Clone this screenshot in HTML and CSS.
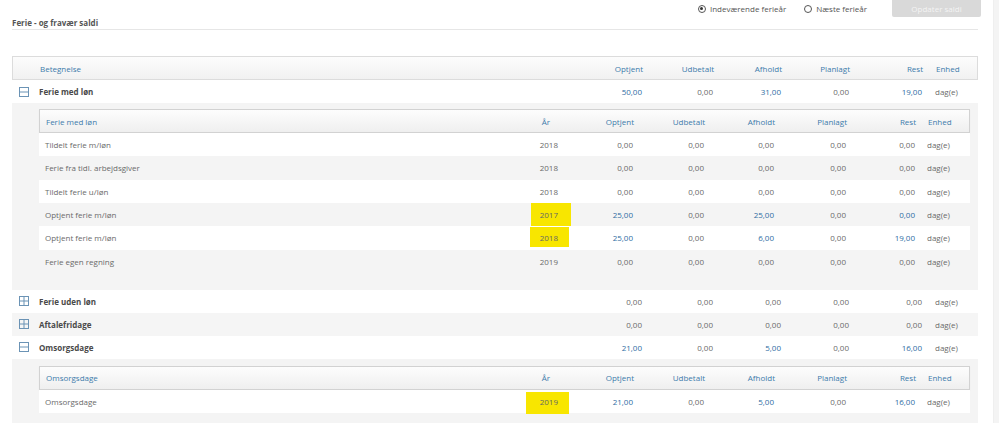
FILE: index.html
```html
<!DOCTYPE html>
<html lang="da">
<head>
<meta charset="utf-8">
<title>Ferie - og fravær saldi</title>
<link rel="stylesheet" href="styles.css">
</head>
<body>
<div class="page">
  <div class="content">
    <div class="topbar">
      <label class="radio"><span class="dot checked"></span>Indeværende ferieår</label>
      <label class="radio second"><span class="dot"></span>Næste ferieår</label>
      <span class="btn">Opdater saldi</span>
    </div>
    <div class="title">Ferie - og fravær saldi</div>

    <div class="main">
      <div class="mrow mhead">
        <span></span>
        <span class="l">Betegnelse</span>
        <span>Optjent</span><span>Udbetalt</span><span>Afholdt</span><span>Planlagt</span><span>Rest</span><span class="unit">Enhed</span>
      </div>

      <div class="mrow">
        <span class="ic"><svg width="10" height="10" viewBox="0 0 10 10"><rect x="0.5" y="0.5" width="9" height="9" fill="none" stroke="#6b93b5"/><line x1="0.5" y1="5" x2="9.5" y2="5" stroke="#6b93b5"/></svg></span>
        <span class="l b">Ferie med løn</span>
        <span class="blue">50,00</span><span>0,00</span><span class="blue">31,00</span><span>0,00</span><span class="blue">19,00</span><span class="unit">dag(e)</span>
      </div>

      <div class="panel">
        <div class="inner">
          <div class="irow ihead">
            <span class="l">Ferie med løn</span><span class="yr">År</span><span>Optjent</span><span>Udbetalt</span><span>Afholdt</span><span>Planlagt</span><span>Rest</span><span class="unit">Enhed</span>
          </div>
          <div class="irow"><span class="l">Tildelt ferie m/løn</span><span>2018</span><span>0,00</span><span>0,00</span><span>0,00</span><span>0,00</span><span>0,00</span><span class="unit">dag(e)</span></div>
          <div class="irow alt"><span class="l">Ferie fra tidl. arbejdsgiver</span><span>2018</span><span>0,00</span><span>0,00</span><span>0,00</span><span>0,00</span><span>0,00</span><span class="unit">dag(e)</span></div>
          <div class="irow"><span class="l">Tildelt ferie u/løn</span><span>2018</span><span>0,00</span><span>0,00</span><span>0,00</span><span>0,00</span><span>0,00</span><span class="unit">dag(e)</span></div>
          <div class="irow alt"><span class="l">Optjent ferie m/løn</span><span><mark class="hl hl1">2017</mark></span><span class="blue">25,00</span><span>0,00</span><span class="blue">25,00</span><span>0,00</span><span class="blue">0,00</span><span class="unit">dag(e)</span></div>
          <div class="irow"><span class="l">Optjent ferie m/løn</span><span><mark class="hl hl2">2018</mark></span><span class="blue">25,00</span><span>0,00</span><span class="blue">6,00</span><span>0,00</span><span class="blue">19,00</span><span class="unit">dag(e)</span></div>
          <div class="irow alt"><span class="l">Ferie egen regning</span><span>2019</span><span>0,00</span><span>0,00</span><span>0,00</span><span>0,00</span><span>0,00</span><span class="unit">dag(e)</span></div>
        </div>
      </div>

      <div class="mrow">
        <span class="ic"><svg width="10" height="10" viewBox="0 0 10 10"><rect x="0.5" y="0.5" width="9" height="9" fill="none" stroke="#6b93b5"/><line x1="0.5" y1="5" x2="9.5" y2="5" stroke="#6b93b5"/><line x1="5" y1="0.5" x2="5" y2="9.5" stroke="#6b93b5"/></svg></span>
        <span class="l b">Ferie uden løn</span>
        <span>0,00</span><span>0,00</span><span>0,00</span><span>0,00</span><span>0,00</span><span class="unit">dag(e)</span>
      </div>
      <div class="mrow alt">
        <span class="ic"><svg width="10" height="10" viewBox="0 0 10 10"><rect x="0.5" y="0.5" width="9" height="9" fill="none" stroke="#6b93b5"/><line x1="0.5" y1="5" x2="9.5" y2="5" stroke="#6b93b5"/><line x1="5" y1="0.5" x2="5" y2="9.5" stroke="#6b93b5"/></svg></span>
        <span class="l b">Aftalefridage</span>
        <span>0,00</span><span>0,00</span><span>0,00</span><span>0,00</span><span>0,00</span><span class="unit">dag(e)</span>
      </div>
      <div class="mrow">
        <span class="ic"><svg width="10" height="10" viewBox="0 0 10 10"><rect x="0.5" y="0.5" width="9" height="9" fill="none" stroke="#6b93b5"/><line x1="0.5" y1="5" x2="9.5" y2="5" stroke="#6b93b5"/></svg></span>
        <span class="l b">Omsorgsdage</span>
        <span class="blue">21,00</span><span>0,00</span><span class="blue">5,00</span><span>0,00</span><span class="blue">16,00</span><span class="unit">dag(e)</span>
      </div>

      <div class="panel panel2">
        <div class="inner">
          <div class="irow ihead">
            <span class="l">Omsorgsdage</span><span class="yr">År</span><span>Optjent</span><span>Udbetalt</span><span>Afholdt</span><span>Planlagt</span><span>Rest</span><span class="unit">Enhed</span>
          </div>
          <div class="irow"><span class="l">Omsorgsdage</span><span><mark class="hl hl3">2019</mark></span><span class="blue">21,00</span><span>0,00</span><span class="blue">5,00</span><span>0,00</span><span class="blue">16,00</span><span class="unit">dag(e)</span></div>
        </div>
      </div>
    </div>
  </div>
  <div class="strip"></div>
</div>
</body>
</html>
```

FILE: styles.css
```css
html, body { margin: 0; padding: 0; background: #fff; }
body {
  font-family: "Open Sans", "Liberation Sans", sans-serif;
  font-size: 8px;
  color: #6a6a6a;
}
.page { display: flex; width: 999px; height: 423px; overflow: hidden; }
.content { width: 969px; padding-left: 12px; flex: none; }
.strip { flex: 1; margin-left: 12px; background: #f4f4f4; border-left: 1px solid #efefef; }

.topbar { display: flex; justify-content: flex-end; align-items: center; height: 17px; }
.radio { display: flex; align-items: center; color: #555; font-size: 8px; }
.radio.second { margin-left: 18px; }
.dot {
  width: 6px; height: 6px; border: 1px solid #555; border-radius: 50%;
  margin-right: 4px; box-sizing: content-box; position: relative; background: #fff;
}
.dot.checked::after {
  content: ""; position: absolute; left: 1.5px; top: 1.5px; width: 3px; height: 3px;
  border-radius: 50%; background: #333;
}
.btn {
  margin-left: 25px; width: 89px; height: 17px; background: #d9d9d9; color: #f4f4f4;
  display: flex; align-items: center; justify-content: center; border-radius: 0 0 2px 2px;
}

.title {
  width: 966px; font-weight: 700; color: #555; line-height: 11px;
  padding-bottom: 1px; border-bottom: 1px solid #e6e6e6; height: 11px;
}

.main { width: 966px; margin-top: 26px; }
.mrow {
  display: grid;
  grid-template-columns: 27px 533px 70px 71px 68px 68px 73px 56px;
  height: 23px; align-items: center; background: #fff;
}
.mrow.alt { background: #f5f5f5; }
.mrow > span, .irow > span { text-align: right; white-space: nowrap; }
.mrow > .l, .irow > .l { text-align: left; }
.mrow > .unit { text-align: left; padding-left: 13px; }
.mrow > .ic { display: flex; justify-content: center; padding-right: 4px; height: 10px; }
.mhead {
  height: 24px; box-sizing: border-box;
  border: 1px solid #dcdcdc;
  background: linear-gradient(#fcfcfc, #f1f1f1);
  color: #3d7bab;
}
.b { font-weight: 700; color: #4a4a4a; }
.blue { color: #2f6da3; }

.panel { background: #f4f4f4; padding: 6px 8px 17px 27px; }
.panel2 { padding-top: 7px; padding-bottom: 12px; }
.inner { width: 931px; }
.irow {
  display: grid;
  grid-template-columns: 481px 38px 75px 71px 70px 72px 69px 55px;
  height: 23.33px; align-items: center; background: #fff;
}
.irow.alt { background: #f4f4f4; }
.irow > .l { padding-left: 6px; }
.irow > .unit { text-align: left; padding-left: 12px; }
.ihead {
  height: 24px; box-sizing: border-box;
  border: 1px solid #d2d2d2;
  background: linear-gradient(#fdfdfd, #efefef);
  color: #3d7bab;
  box-shadow: 0 1px 1px rgba(0,0,0,0.05);
}
.ihead > .yr { padding-right: 9px; }

.hl {
  background: #f8e600; color: #666; display: inline-block;
  line-height: 11px;
}
.hl1 { padding: 6px 13px 6px 9px; margin: -6px -13px -6px -9px; }
.hl2 { padding: 5px 11px 4px 10px; margin: -5px -11px -4px -10px; }
.hl3 { padding: 4px 11px 7px 14px; margin: -4px -11px -7px -14px; }
```
